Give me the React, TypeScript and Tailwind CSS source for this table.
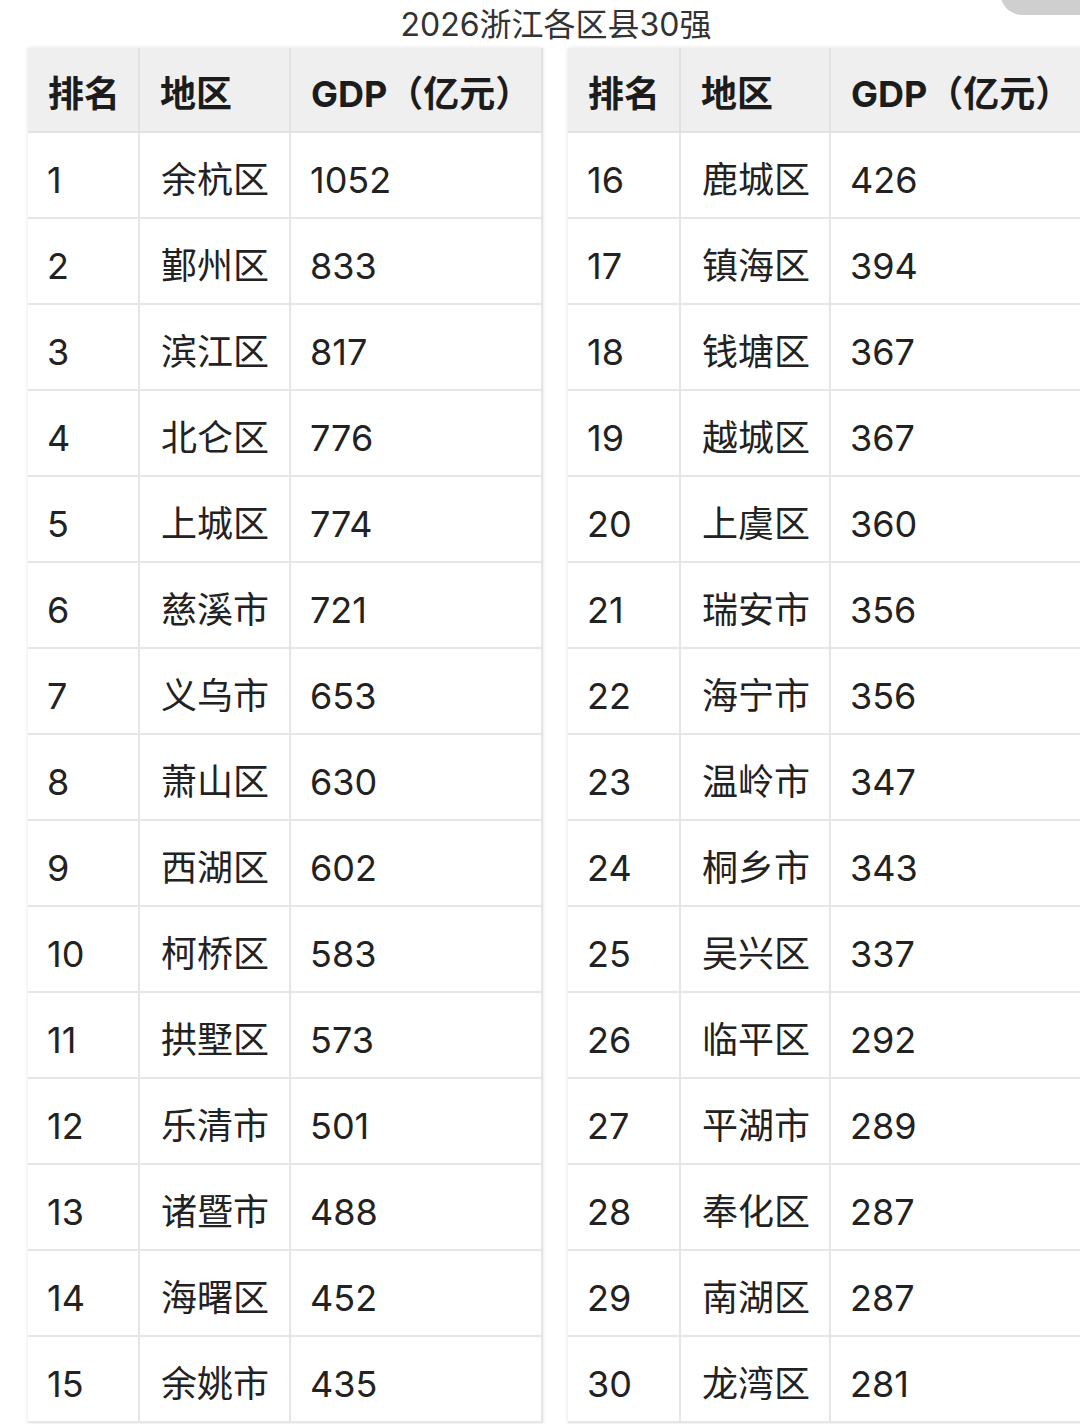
const left = [
    ['1', '余杭区', '1052'],
    ['2', '鄞州区', '833'],
    ['3', '滨江区', '817'],
    ['4', '北仑区', '776'],
    ['5', '上城区', '774'],
    ['6', '慈溪市', '721'],
    ['7', '义乌市', '653'],
    ['8', '萧山区', '630'],
    ['9', '西湖区', '602'],
    ['10', '柯桥区', '583'],
    ['11', '拱墅区', '573'],
    ['12', '乐清市', '501'],
    ['13', '诸暨市', '488'],
    ['14', '海曙区', '452'],
    ['15', '余姚市', '435'],
];

const right = [
    ['16', '鹿城区', '426'],
    ['17', '镇海区', '394'],
    ['18', '钱塘区', '367'],
    ['19', '越城区', '367'],
    ['20', '上虞区', '360'],
    ['21', '瑞安市', '356'],
    ['22', '海宁市', '356'],
    ['23', '温岭市', '347'],
    ['24', '桐乡市', '343'],
    ['25', '吴兴区', '337'],
    ['26', '临平区', '292'],
    ['27', '平湖市', '289'],
    ['28', '奉化区', '287'],
    ['29', '南湖区', '287'],
    ['30', '龙湾区', '281'],
];

function RankTable({ rows, cols }: { rows: string[][]; cols: string }) {
    return (
        <div className={`grid ${cols} shrink-0 shadow-[0_0_4px_rgba(0,0,0,0.12)]`}>
            {['排名', '地区', 'GDP（亿元）'].map((h) => (
                <div
                    key={h}
                    className="h-[85px] bg-[#efefef] border-r-2 border-b-2 border-[#e2e2e2] flex items-center pl-[20px] pt-[8px] text-[36px] font-bold text-[#1c1c1c] whitespace-nowrap"
                >
                    {h}
                </div>
            ))}
            {rows.map((r) =>
                r.map((c, i) => (
                    <div
                        key={r[0] + i}
                        className={`h-[86px] bg-white border-r-2 border-b-2 border-[#e6e6e6] flex items-center pt-[9px] text-[36px] text-[#222] whitespace-nowrap ${
                            i === 1 ? 'pl-[21px]' : 'pl-[19px]'
                        }`}
                    >
                        {c}
                    </div>
                ))
            )}
        </div>
    );
}

export default function App() {
    return (
        <div
            className="relative w-[1080px] h-[1424px] overflow-hidden bg-white"
            style={{ fontFamily: 'Inter, "Noto Sans CJK SC", sans-serif' }}
        >
            <div className="absolute right-[-40px] top-[-30px] w-[120px] h-[45px] rounded-full bg-[#cfcfcf]" />
            <div className="h-[48px] flex items-center justify-center pl-[32px] pt-[2px] text-[32px] text-[#333] leading-none">
                2026浙江各区县30强
            </div>
            <div className="flex gap-[25px] pl-[28px]">
                <RankTable rows={left} cols="grid-cols-[112px_151px_252px]" />
                <RankTable rows={right} cols="grid-cols-[113px_150px_260px]" />
            </div>
        </div>
    );
}
